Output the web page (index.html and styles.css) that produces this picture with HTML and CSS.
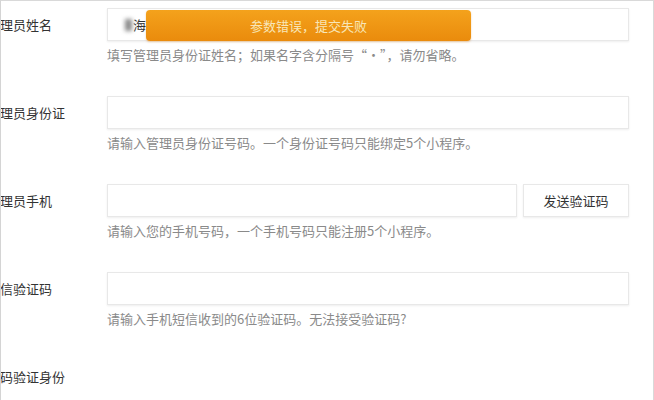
FILE: index.html
```html
<!DOCTYPE html>
<html lang="zh-CN">
<head>
<meta charset="utf-8">
<title>管理员信息</title>
<link rel="stylesheet" href="styles.css">
</head>
<body>
<div class="page">
  <div class="form">
    <div class="row">
      <div class="label">理员姓名</div>
      <div class="field">
        <div class="input"><span class="blob"></span><span class="value">海</span></div>
        <div class="hint">填写管理员身份证姓名；如果名字含分隔号“·”，请勿省略。</div>
      </div>
    </div>
    <div class="row">
      <div class="label">理员身份证</div>
      <div class="field">
        <div class="input"></div>
        <div class="hint">请输入管理员身份证号码。一个身份证号码只能绑定5个小程序。</div>
      </div>
    </div>
    <div class="row">
      <div class="label">理员手机</div>
      <div class="field">
        <div class="inline">
          <div class="input grow"></div>
          <div class="btn">发送验证码</div>
        </div>
        <div class="hint">请输入您的手机号码，一个手机号码只能注册5个小程序。</div>
      </div>
    </div>
    <div class="row">
      <div class="label">信验证码</div>
      <div class="field">
        <div class="input"></div>
        <div class="hint">请输入手机短信收到的6位验证码。无法接受验证码?</div>
      </div>
    </div>
    <div class="row">
      <div class="label">码验证身份</div>
      <div class="field"><div class="spacer"></div></div>
    </div>
  </div>
  <div class="toast">参数错误，提交失败</div>
</div>
</body>
</html>
```
FILE: styles.css
```css
html, body {
  margin: 0;
  padding: 0;
  background: #ffffff;
}
body {
  font-family: "Noto Sans CJK SC", "Noto Sans", sans-serif;
  font-size: 13px;
  color: #333;
}
.page {
  position: relative;
  width: 654px;
  height: 400px;
  box-sizing: border-box;
  border-top: 1px solid #d9d9d9;
  border-left: 1px solid #d4d4d4;
  border-right: 1px solid #d9d9d9;
  overflow: hidden;
}
.form {
  padding-top: 7px;
  display: flex;
  flex-direction: column;
}
.row {
  display: grid;
  grid-template-columns: 106px 522px;
  height: 88px;
}
.label {
  height: 33px;
  line-height: 33px;
  margin-left: -1px;
  color: #333;
  white-space: nowrap;
}
.field {
  display: flex;
  flex-direction: column;
}
.input {
  height: 33px;
  box-sizing: border-box;
  background: #fff;
  border: 1px solid #e8e8e8;
  box-shadow: 0 1px 2px rgba(0, 0, 0, 0.07);
  display: flex;
  align-items: center;
  padding-left: 17px;
}
.blob {
  width: 7px;
  height: 12px;
  background: #8a8a8a;
  filter: blur(2px);
  margin-right: 1px;
}
.value {
  color: #333;
}
.inline {
  display: flex;
  gap: 6px;
}
.grow {
  width: 410px;
}
.btn {
  width: 106px;
  height: 33px;
  box-sizing: border-box;
  border: 1px solid #e8e8e8;
  box-shadow: 0 1px 2px rgba(0, 0, 0, 0.07);
  background: #fff;
  display: flex;
  align-items: center;
  justify-content: center;
  color: #333;
}
.hint {
  margin-top: 4px;
  line-height: 20px;
  color: #8a8a8a;
  white-space: nowrap;
}
.spacer {
  height: 33px;
}
.toast {
  position: absolute;
  left: 145px;
  top: 9px;
  width: 325px;
  height: 31px;
  border-radius: 4px;
  background: linear-gradient(#f4a21c, #ea8b0c);
  box-shadow: 0 1px 2px rgba(200, 110, 0, 0.35);
  color: #f8e6b8;
  font-size: 13px;
  display: flex;
  align-items: center;
  justify-content: center;
}
```
